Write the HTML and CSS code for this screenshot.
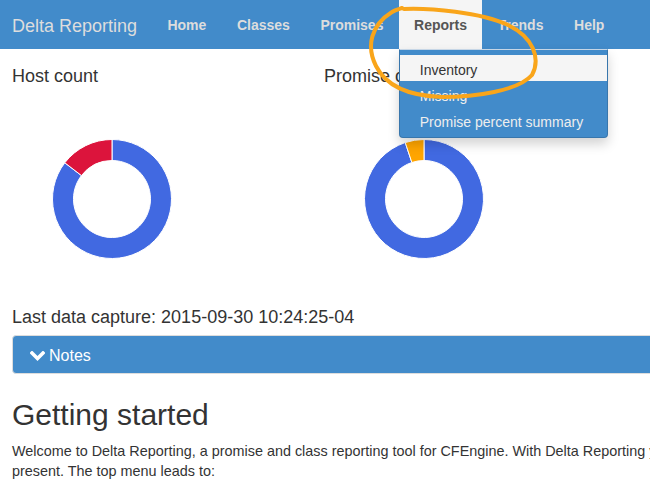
FILE: index.html
```html
<!DOCTYPE html>
<html lang="en">
<head>
<meta charset="utf-8">
<title>Delta Reporting</title>
<link rel="stylesheet" href="styles.css">
</head>
<body>
<div class="page">
  <nav class="navbar">
    <a class="brand" href="#">Delta Reporting</a>
    <ul class="nav">
      <li><a href="#">Home</a></li>
      <li><a href="#">Classes</a></li>
      <li><a href="#">Promises</a></li>
      <li class="active">
        <a href="#">Reports</a>
        <ul class="dropdown-menu">
          <li class="hover"><a href="#">Inventory</a></li>
          <li><a href="#">Missing</a></li>
          <li><a href="#">Promise percent summary</a></li>
        </ul>
      </li>
      <li><a href="#">Trends</a></li>
      <li><a href="#">Help</a></li>
    </ul>
  </nav>

  <main class="content">
    <div class="charts">
      <section class="chart">
        <h4>Host count</h4>
        <svg class="donut" width="200" height="200" viewBox="0 0 200 200">
          <path class="seg-blue" d="M 100 40.5 A 59.5 59.5 0 1 1 52.79 63.78 L 69.45 76.56 A 38.5 38.5 0 1 0 100 61.5 Z"/>
          <path class="seg-red" d="M 52.79 63.78 A 59.5 59.5 0 0 1 100 40.5 L 100 61.5 A 38.5 38.5 0 0 0 69.45 76.56 Z"/>
        </svg>
      </section>
      <section class="chart">
        <h4>Promise count</h4>
        <svg class="donut" width="200" height="200" viewBox="0 0 200 200">
          <path class="seg-blue" d="M 100 40.5 A 59.5 59.5 0 1 1 81.22 43.54 L 87.85 63.47 A 38.5 38.5 0 1 0 100 61.5 Z"/>
          <path class="seg-orange" d="M 81.22 43.54 A 59.5 59.5 0 0 1 100 40.5 L 100 61.5 A 38.5 38.5 0 0 0 87.85 63.47 Z"/>
        </svg>
      </section>
    </div>

    <p class="capture">Last data capture: 2015-09-30 10:24:25-04</p>

    <div class="panel">
      <div class="panel-heading">
        <svg class="chevron" width="15" height="10" viewBox="0 0 15 10"><polyline points="2,2 7.5,7.5 13,2"/></svg>
        <span>Notes</span>
      </div>
    </div>

    <h2>Getting started</h2>
    <p class="intro">Welcome to Delta Reporting, a promise and class reporting tool for CFEngine. With Delta Reporting you can see the past and<br>present. The top menu leads to:</p>
  </main>
</div>

<svg class="annotation" width="650" height="120" viewBox="0 0 650 120">
  <path d="M 404 9 C 430 8, 480 12, 508 25 C 533 37, 541 58, 532 75 C 518 91, 475 97, 442 97 C 410 96, 386 86, 376 66 C 366 46, 371 25, 392 12 C 395 10, 399 9, 402 8"/>
</svg>
</body>
</html>
```

FILE: styles.css
```css
html {
  overflow: hidden;
}

body {
  margin: 0;
  font-family: "Liberation Sans", Arial, sans-serif;
  font-size: 14px;
  line-height: 20px;
  color: #333;
  background: #fff;
}

a {
  text-decoration: none;
}

.page {
  width: 980px;
}

/* Navbar */
.navbar {
  display: flex;
  height: 49px;
  background: #428bca;
}

.brand {
  padding: 16px 15px 0 12px;
  font-size: 18px;
  line-height: 20px;
  color: #dddddd;
}

.nav {
  display: flex;
  list-style: none;
  margin: 0;
  padding: 0;
}

.nav > li {
  position: relative;
}

.nav > li > a {
  display: block;
  height: 49px;
  box-sizing: border-box;
  padding: 15px 15.3px 0;
  font-weight: bold;
  line-height: 20px;
  color: #dddddd;
}

.nav > li.active > a {
  background: #f5f5f5;
  color: #555;
}

.dropdown-menu {
  position: absolute;
  top: 100%;
  left: 0;
  z-index: 10;
  min-width: 207px;
  margin: 0;
  padding: 5px 0 4px;
  list-style: none;
  background: #428bca;
  border: 1px solid rgba(0, 0, 0, 0.15);
  border-top-color: #c6d6e6;
  border-radius: 0 0 4px 4px;
  box-shadow: 0 6px 12px rgba(0, 0, 0, 0.175);
}

.dropdown-menu a {
  display: block;
  padding: 5px 20px 1px;
  line-height: 20px;
  color: #eeeeee;
  white-space: nowrap;
}

.dropdown-menu li.hover a {
  background: #f5f5f5;
  color: #333;
}

/* Content */
.content {
  padding: 0 12px;
}

.charts {
  display: grid;
  grid-template-columns: 300px 300px;
  column-gap: 12px;
}

.chart h4 {
  margin: 17px 0 13px;
  font-size: 18px;
  font-weight: normal;
  line-height: 20px;
}

.donut {
  display: block;
}

.donut path {
  stroke: #fff;
  stroke-width: 1;
}

.seg-blue {
  fill: #4169e1;
}

.seg-red {
  fill: #dc143c;
}

.seg-orange {
  fill: #ffa500;
}

.capture {
  margin: 8px 0 8px;
  font-size: 18px;
  line-height: 20px;
}

.panel {
  border: 1px solid #dddddd;
  border-radius: 4px;
  background: #428bca;
}

.panel-heading {
  display: flex;
  align-items: center;
  gap: 4px;
  padding: 11px 17px 9px;
  font-size: 16px;
  line-height: 17px;
  color: #fff;
}

.chevron polyline {
  fill: none;
  stroke: #fff;
  stroke-width: 3.5;
  stroke-linecap: square;
  stroke-linejoin: miter;
}

h2 {
  margin: 24px 0 10px;
  font-size: 30px;
  font-weight: normal;
  line-height: 33px;
}

.intro {
  margin: 0;
  font-size: 14.4px;
}

/* Hand-drawn highlight */
.annotation {
  position: absolute;
  top: 0;
  left: 0;
  z-index: 20;
  pointer-events: none;
}

.annotation path {
  fill: none;
  stroke: #f9a51a;
  stroke-width: 4;
  stroke-linecap: round;
  stroke-linejoin: round;
}
```
